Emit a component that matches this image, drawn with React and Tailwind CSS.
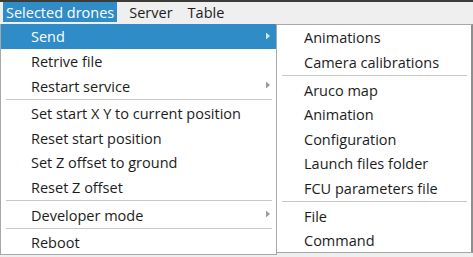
import React from "react";

const font = { fontFamily: "'Open Sans', 'Noto Sans', sans-serif" };

function Arrow({ light }) {
  return (
    <svg width="4" height="7" viewBox="0 0 4 7" className="absolute right-[6px] top-1/2 -translate-y-1/2">
      <path d="M0 0 L4 3.5 L0 7 Z" fill={light ? "#d6e8f4" : "#9a9a9a"} />
    </svg>
  );
}

function Item({ label, active, sub }) {
  return (
    <div
      className={
        "relative flex h-[24.6px] items-center pl-[30px] pt-[2px] text-[14.5px] " +
        (active ? "bg-[#308cc6] text-white" : "text-[#1c1c1c]")
      }
    >
      {label}
      {sub && <Arrow light={active} />}
    </div>
  );
}

function Sep() {
  return (
    <div className="py-[1px] pl-[5px] pr-[4px]">
      <div className="h-px bg-[#c8c8c8]" />
    </div>
  );
}

function SubItem({ label }) {
  return (
    <div className="flex h-[24.6px] items-center pl-[27px] pt-[2px] text-[14.5px] text-[#1c1c1c]">{label}</div>
  );
}

export default function App() {
  return (
    <div className="relative h-[257px] w-[473px] overflow-hidden bg-[#efefef]" style={font}>
      <div className="h-[2px] bg-[#3c3b37]" />
      <div className="flex h-[22px] items-start text-[14.5px] text-[#1c1c1c]">
        <div className="ml-[3px] flex h-[20px] items-center bg-[#308cc6] px-[3px] pt-[1px] text-white">Selected drones</div>
        <div className="ml-[12px] flex h-[20px] items-center pt-[1px]">Server</div>
        <div className="ml-[15px] flex h-[20px] items-center pt-[1px]">Table</div>
      </div>

      <div className="w-[277px] border-x border-b border-[#a8a8a8] bg-white">
        <Item label="Send" active sub />
        <Item label="Retrive file" />
        <Item label="Restart service" sub />
        <Sep />
        <Item label="Set start X Y to current position" />
        <Item label="Reset start position" />
        <Item label="Set Z offset to ground" />
        <Item label="Reset Z offset" />
        <Sep />
        <Item label="Developer mode" sub />
        <Sep />
        <Item label="Reboot" />
      </div>

      <div className="absolute left-[276px] top-[24px] w-[197px] border-y border-l border-r-2 border-[#a8a8a8] border-r-[#8f8f8f] bg-white">
        <SubItem label="Animations" />
        <SubItem label="Camera calibrations" />
        <Sep />
        <SubItem label="Aruco map" />
        <SubItem label="Animation" />
        <SubItem label="Configuration" />
        <SubItem label="Launch files folder" />
        <SubItem label="FCU parameters file" />
        <Sep />
        <SubItem label="File" />
        <SubItem label="Command" />
      </div>
    </div>
  );
}
